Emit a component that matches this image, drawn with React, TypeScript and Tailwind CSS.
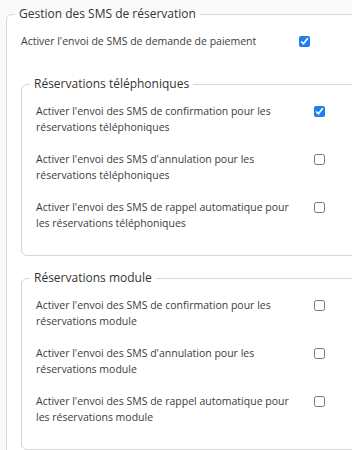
import React from 'react';

const telephoneOptions = [
  { label: "Activer l'envoi des SMS de confirmation pour les réservations téléphoniques", checked: true },
  { label: "Activer l'envoi des SMS d'annulation pour les réservations téléphoniques", checked: false },
  { label: "Activer l'envoi des SMS de rappel automatique pour les réservations téléphoniques", checked: false },
];

const moduleOptions = [
  { label: "Activer l'envoi des SMS de confirmation pour les réservations module", checked: false },
  { label: "Activer l'envoi des SMS d'annulation pour les réservations module", checked: false },
  { label: "Activer l'envoi des SMS de rappel automatique pour les réservations module", checked: false },
];

function OptionRow({ label, checked }: { label: string; checked: boolean }) {
  return (
    <label className="flex items-start">
      <span className="w-[260px] text-[10.5px] leading-4 text-[#3c3c3c]">{label}</span>
      <input
        type="checkbox"
        defaultChecked={checked}
        className="ml-[18px] mt-[3px] h-[11px] w-[11px] shrink-0 accent-[#1d7ff0]"
      />
    </label>
  );
}

function Group({ title, options, className }: { title: string; options: typeof moduleOptions; className?: string }) {
  return (
    <fieldset className={`rounded-md border border-[#d6d6d6] bg-white pl-[14px] pt-[10px] pb-[24px] ${className ?? ''}`}>
      <legend className="-ml-[6px] px-1 text-[12px] font-medium leading-[18px] text-[#333]">{title}</legend>
      <div className="flex flex-col gap-4">
        {options.map((o) => (
          <OptionRow key={o.label} label={o.label} checked={o.checked} />
        ))}
      </div>
    </fieldset>
  );
}

export default function App() {
  return (
    <div className="h-[450px] w-[352px] overflow-hidden bg-[#f9f9f9]" style={{ fontFamily: '"Open Sans", "Noto Sans", sans-serif' }}>
      <div className="w-[440px] pl-[6px] pt-[5px]">
        <fieldset className="rounded-md border border-[#d6d6d6] bg-white pl-[14px] pr-[20px] pt-[10px] pb-[30px]">
          <legend className="-ml-[6px] px-1 text-[12px] font-medium leading-[18px] text-[#333]">
            Gestion des SMS de réservation
          </legend>
          <OptionRow label="Activer l'envoi de SMS de demande de paiement" checked={true} />
          <Group title="Réservations téléphoniques" options={telephoneOptions} className="mt-[26px]" />
          <Group title="Réservations module" options={moduleOptions} className="mt-[13px]" />
        </fieldset>
      </div>
    </div>
  );
}
